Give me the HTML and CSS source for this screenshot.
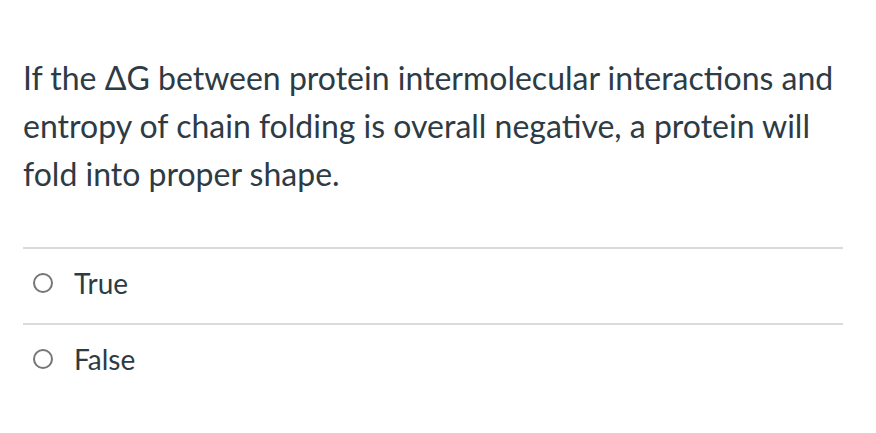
FILE: index.html
```html
<!DOCTYPE html>
<html>
<head>
<meta charset="utf-8">
<link rel="stylesheet" href="styles.css">
</head>
<body>
<div class="question">
  <div class="text">If the ΔG between protein intermolecular interactions and entropy of chain folding is overall negative, a protein will fold into proper shape.</div>
  <div class="answers">
    <label class="answer"><span class="radio"></span><span class="label">True</span></label>
    <label class="answer"><span class="radio"></span><span class="label">False</span></label>
  </div>
</div>
</body>
</html>
```

FILE: styles.css
```css
html, body {
  margin: 0;
  background: #fff;
}
.question {
  width: 820px;
  margin-left: 23px;
  padding-top: 54px;
  font-family: Lato, "Noto Sans", sans-serif;
  color: #2d3b45;
}
.text {
  font-size: 32px;
  line-height: 48px;
  padding-bottom: 49px;
}
.answers {
  border-top: 2px solid #dadada;
}
.answer {
  display: flex;
  align-items: center;
  height: 74px;
  box-sizing: content-box;
  padding-bottom: 0;
  border-bottom: 2px solid #dadada;
  font-size: 28px;
}
.answer .label {
  margin-bottom: 6px;
}
.answer:last-child {
  border-bottom: none;
}
.radio {
  width: 20px;
  height: 20px;
  border: 2px solid #767676;
  border-radius: 50%;
  box-sizing: border-box;
  margin-left: 10px;
  margin-right: 21px;
  margin-bottom: 7px;
}
```
